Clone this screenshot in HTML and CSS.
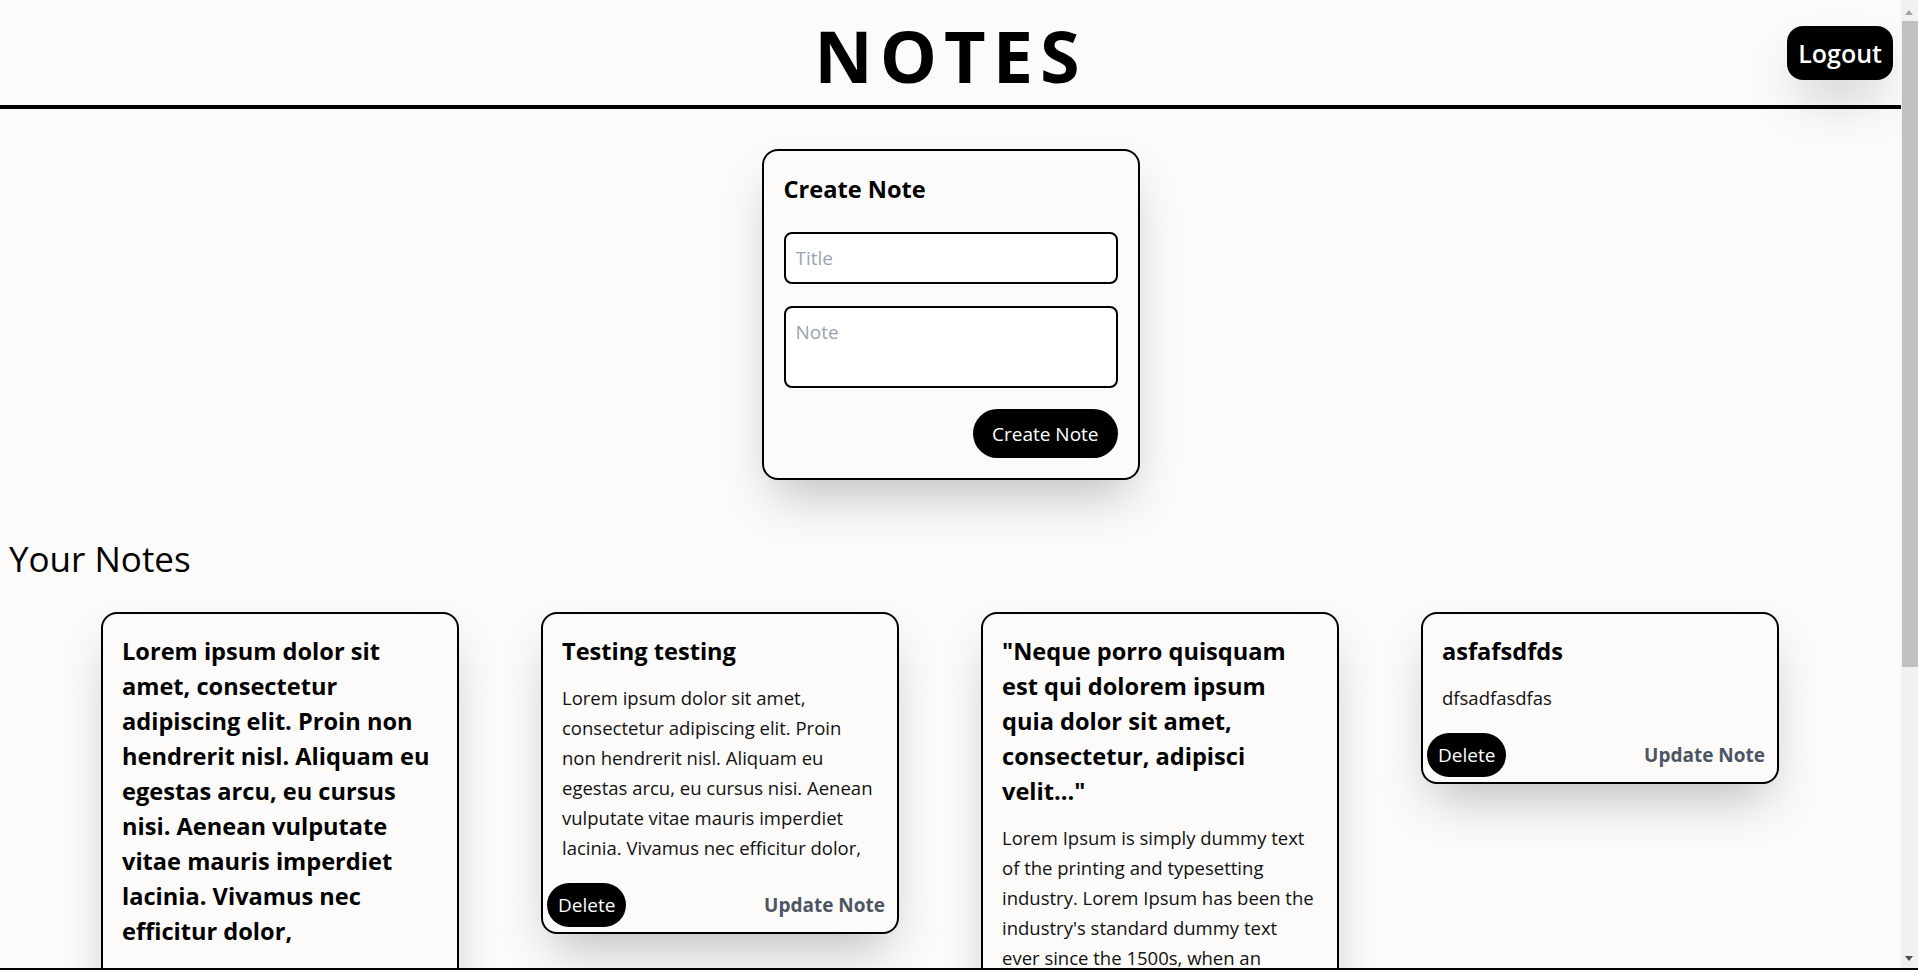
FILE: index.html
```html
<!DOCTYPE html>
<html lang="en">
<head>
<meta charset="utf-8">
<title>Notes</title>
<link rel="stylesheet" href="styles.css">
</head>
<body>
<div class="app">
  <header class="topbar">
    <div class="topbar-side"></div>
    <h1 class="brand">NOTES</h1>
    <div class="topbar-side topbar-right">
      <button class="btn-logout">Logout</button>
    </div>
  </header>

  <main class="page">
    <section class="create-card">
      <h2 class="create-title">Create Note</h2>
      <input class="field field-title" type="text" placeholder="Title">
      <textarea class="field field-note" placeholder="Note"></textarea>
      <div class="create-actions">
        <button class="btn-pill btn-create">Create Note</button>
      </div>
    </section>

    <h2 class="section-title">Your Notes</h2>

    <div class="notes-grid">
      <article class="note">
        <div class="note-content">
          <h3 class="note-title">Lorem ipsum dolor sit amet, consectetur adipiscing elit. Proin non hendrerit nisl. Aliquam eu egestas arcu, eu cursus nisi. Aenean vulputate vitae mauris imperdiet lacinia. Vivamus nec efficitur dolor,</h3>
          <p class="note-text">Lorem ipsum dolor sit amet, consectetur adipiscing elit. Proin non hendrerit nisl. Aliquam eu egestas arcu, eu cursus nisi.</p>
        </div>
        <div class="note-actions">
          <button class="btn-pill btn-delete">Delete</button>
          <button class="btn-update">Update Note</button>
        </div>
      </article>

      <article class="note">
        <div class="note-content">
          <h3 class="note-title">Testing testing</h3>
          <p class="note-text">Lorem ipsum dolor sit amet, consectetur adipiscing elit. Proin non hendrerit nisl. Aliquam eu egestas arcu, eu cursus nisi. Aenean vulputate vitae mauris imperdiet lacinia. Vivamus nec efficitur dolor,</p>
        </div>
        <div class="note-actions">
          <button class="btn-pill btn-delete">Delete</button>
          <button class="btn-update">Update Note</button>
        </div>
      </article>

      <article class="note">
        <div class="note-content">
          <h3 class="note-title">"Neque porro quisquam est qui dolorem ipsum quia dolor sit amet, consectetur, adipisci velit..."</h3>
          <p class="note-text">Lorem Ipsum is simply dummy text of the printing and typesetting industry. Lorem Ipsum has been the industry's standard dummy text ever since the 1500s, when an unknown printer took a galley of type and scrambled it to make a type specimen book.</p>
        </div>
        <div class="note-actions">
          <button class="btn-pill btn-delete">Delete</button>
          <button class="btn-update">Update Note</button>
        </div>
      </article>

      <article class="note">
        <div class="note-content">
          <h3 class="note-title">asfafsdfds</h3>
          <p class="note-text">dfsadfasdfas</p>
        </div>
        <div class="note-actions">
          <button class="btn-pill btn-delete">Delete</button>
          <button class="btn-update">Update Note</button>
        </div>
      </article>
    </div>
  </main>
</div>

<div class="window-edge"></div>
<div class="scrollbar" aria-hidden="true">
  <span class="scroll-arrow scroll-up"></span>
  <span class="scroll-thumb"></span>
  <span class="scroll-arrow scroll-down"></span>
</div>
</body>
</html>
```
FILE: styles.css
```css
html, body {
  margin: 0;
  padding: 0;
}
body {
  background: #fcfbf9;
  color: #000;
  font-family: "Open Sans", "Noto Sans", sans-serif;
}
button, input, textarea {
  font-family: inherit;
}
.app {
  margin-right: 17px;
}

.topbar {
  display: grid;
  grid-template-columns: 1fr auto 1fr;
  align-items: center;
  height: 105px;
  border-bottom: 4px solid #000;
}
.topbar-right {
  display: flex;
  justify-content: flex-end;
  padding-right: 8px;
}
.brand {
  margin: 5px 0 0;
  font-size: 72px;
  font-weight: 700;
  letter-spacing: 7px;
  line-height: 1;
}
.btn-logout {
  height: 54px;
  padding: 0 11px;
  border: none;
  border-radius: 16px;
  background: #000;
  color: #fff;
  font-size: 25px;
  font-weight: 600;
  box-shadow: 0 25px 50px -12px rgba(0, 0, 0, 0.25);
  cursor: pointer;
}

.page {
  padding: 40px 0 60px;
}

.create-card {
  width: 378px;
  box-sizing: border-box;
  margin: 0 auto;
  padding: 20px;
  border: 2px solid #000;
  border-radius: 16px;
  background: #fcfbf9;
  box-shadow: 0 25px 50px -12px rgba(0, 0, 0, 0.25);
  display: flex;
  flex-direction: column;
}
.create-title {
  margin: 1px 0 25px;
  font-size: 23.6px;
  line-height: 35px;
  font-weight: 700;
}
.field {
  box-sizing: border-box;
  width: 100%;
  border: 2px solid #000;
  border-radius: 8px;
  background: #fff;
  font-size: 19px;
  padding: 0 10px;
  color: #000;
  outline: none;
}
.field::placeholder {
  color: #9ca3af;
}
.field-title {
  height: 52px;
}
.field-note {
  height: 82px;
  margin-top: 22px;
  padding-top: 9px;
  line-height: 30px;
  resize: none;
  display: block;
}
.create-actions {
  display: flex;
  justify-content: flex-end;
  margin-top: 21px;
}
.btn-pill {
  border: none;
  background: #000;
  color: #fff;
  font-size: 19px;
  border-radius: 999px;
  cursor: pointer;
}
.btn-create {
  height: 49px;
  padding: 0 19px;
}

.section-title {
  margin: 55px 0 29px 9px;
  font-size: 35px;
  line-height: 48px;
  font-weight: 400;
}

.notes-grid {
  display: grid;
  grid-template-columns: repeat(4, 358px);
  column-gap: 82px;
  align-items: start;
  padding-left: 101px;
}
.note {
  border: 2px solid #000;
  border-radius: 16px;
  background: #fcfbf9;
  box-shadow: 0 25px 50px -12px rgba(0, 0, 0, 0.25);
}
.note-content {
  padding: 20px 19px 0;
}
.note-title {
  margin: 0 0 14px;
  font-size: 23.6px;
  line-height: 35px;
  font-weight: 700;
}
.note-text {
  margin: 0;
  font-size: 18.5px;
  line-height: 30px;
  color: #111;
}
.note-actions {
  display: flex;
  justify-content: space-between;
  align-items: center;
  padding: 20px 4px 5px;
}
.btn-delete {
  height: 44px;
  padding: 0 11px;
}
.btn-update {
  height: 44px;
  padding: 0 8px;
  border: none;
  background: transparent;
  color: #4b5563;
  font-size: 19px;
  font-weight: 700;
  cursor: pointer;
}

.window-edge {
  position: fixed;
  left: 0;
  right: 0;
  bottom: 0;
  height: 2px;
  background: #000;
  z-index: 3;
}

.scrollbar {
  position: fixed;
  top: 0;
  right: 0;
  width: 17px;
  height: 100vh;
  background: #f1f1f1;
  z-index: 2;
}
.scroll-thumb {
  position: absolute;
  top: 21px;
  left: 1px;
  right: 0;
  height: 646px;
  background: #c1c1c1;
}
.scroll-arrow {
  position: absolute;
  left: 4px;
  width: 0;
  height: 0;
  border-left: 4.5px solid transparent;
  border-right: 4.5px solid transparent;
}
.scroll-up {
  top: 10px;
  border-bottom: 5px solid #a3a3a3;
}
.scroll-down {
  bottom: 9px;
  border-top: 5px solid #505050;
}
```
